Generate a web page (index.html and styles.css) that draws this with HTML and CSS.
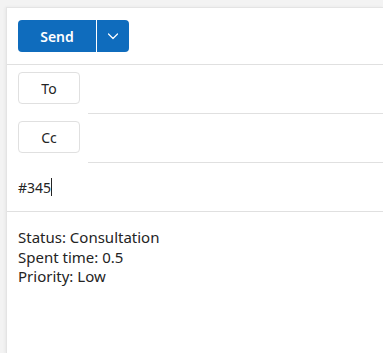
FILE: index.html
```html
<!DOCTYPE html>
<html lang="en">
<head>
    <meta charset="UTF-8">
    <meta name="viewport" content="width=device-width, initial-scale=1.0">
    <title>Compose</title>
    <link rel="stylesheet" href="styles.css">
</head>
<body>
    <div class="compose">
        <div class="toolbar">
            <div class="split-button">
                <button class="send-main">Send</button>
                <button class="send-menu" aria-label="More send options">
                    <svg width="14" height="14" viewBox="0 0 14 14">
                        <path d="M2.5 5 L7 9.5 L11.5 5" fill="none" stroke="#fff" stroke-width="1.2" stroke-linecap="round" stroke-linejoin="round"/>
                    </svg>
                </button>
            </div>
        </div>
        <div class="recipient-row">
            <button class="recipient-button">To</button>
            <div class="recipient-field"></div>
        </div>
        <div class="recipient-row">
            <button class="recipient-button">Cc</button>
            <div class="recipient-field"></div>
        </div>
        <div class="subject-row">
            <span class="subject-text">#345</span><span class="caret"></span>
        </div>
        <div class="message-body">
            <div>Status: Consultation</div>
            <div>Spent time: 0.5</div>
            <div>Priority: Low</div>
        </div>
    </div>
</body>
</html>
```

FILE: styles.css
```css
html, body {
    height: 100%;
}

body {
    margin: 0;
    padding: 7px 0 0 6px;
    box-sizing: border-box;
    background-color: #f3f3f3;
    font-family: 'Noto Sans', 'Open Sans', sans-serif;
    color: #242424;
}

.compose {
    height: 100%;
    background-color: #fff;
    border-top: 1px solid #e4e4e4;
    border-left: 1px solid #e4e4e4;
    box-shadow: -1px 0 3px rgba(0, 0, 0, 0.05);
}

.toolbar {
    padding: 12px 11px;
    border-bottom: 1px solid #e0e0e0;
}

.split-button {
    display: inline-flex;
    height: 32px;
    border-radius: 4px;
    overflow: hidden;
    background-color: #0f6cbd;
}

.split-button button {
    border: none;
    background: none;
    color: #fff;
    padding: 0;
    font-family: inherit;
}

.send-main {
    width: 79px;
    font-size: 14px;
    font-weight: 600;
    border-right: 1px solid #fff !important;
}

.send-menu {
    width: 32px;
    display: flex;
    justify-content: center;
    align-items: center;
}

.recipient-row {
    display: flex;
    align-items: stretch;
    height: 49px;
}

.recipient-button {
    align-self: flex-start;
    box-sizing: border-box;
    margin: 7px 8px 0 11px;
    width: 62px;
    height: 32px;
    border: 1px solid #e0e0e0;
    border-radius: 4px;
    background-color: #fff;
    font-family: inherit;
    font-size: 14px;
    color: #242424;
}

.recipient-field {
    flex: 1;
    border-bottom: 1px solid #e0e0e0;
}

.subject-row {
    box-sizing: border-box;
    height: 49px;
    display: flex;
    align-items: center;
    padding-left: 11px;
    border-bottom: 1px solid #e0e0e0;
    font-size: 14px;
}

.caret {
    width: 1px;
    height: 18px;
    background-color: #242424;
}

.message-body {
    padding: 16px 11px;
    font-size: 15px;
    line-height: 19.5px;
}
```
